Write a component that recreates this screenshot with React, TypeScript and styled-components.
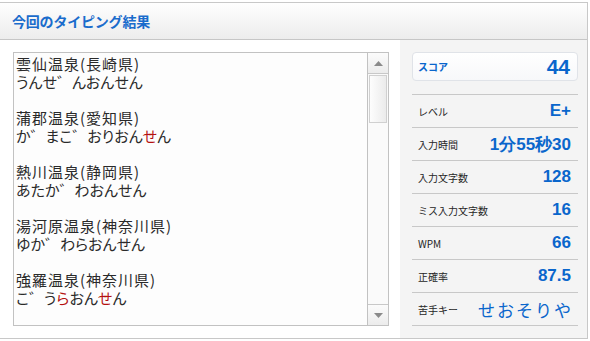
import React from 'react'
import styled, { createGlobalStyle } from 'styled-components'

const GlobalStyle = createGlobalStyle`
  body {
    margin: 0;
    background: #ffffff;
    font-family: "Noto Sans CJK JP", "Noto Sans", sans-serif;
  }
`

const blue = '#0a66cc'

interface Entry {
  name: string
  reading: { text: string; miss?: boolean }[]
}

const entries: Entry[] = [
  { name: '雲仙温泉(長崎県)', reading: [{ text: 'うんせ゛んおんせん' }] },
  {
    name: '蒲郡温泉(愛知県)',
    reading: [{ text: 'か゛まこ゛おりおん' }, { text: 'せ', miss: true }, { text: 'ん' }]
  },
  { name: '熱川温泉(静岡県)', reading: [{ text: 'あたか゛わおんせん' }] },
  { name: '湯河原温泉(神奈川県)', reading: [{ text: 'ゆか゛わらおんせん' }] },
  {
    name: '強羅温泉(神奈川県)',
    reading: [
      { text: 'こ゛う' },
      { text: 'ら', miss: true },
      { text: 'おん' },
      { text: 'せ', miss: true },
      { text: 'ん' }
    ]
  }
]

const stats = [
  { label: 'レベル', value: 'E+' },
  { label: '入力時間', value: '1分55秒30' },
  { label: '入力文字数', value: '128' },
  { label: 'ミス入力文字数', value: '16' },
  { label: 'WPM', value: '66' },
  { label: '正確率', value: '87.5' }
]

export default function App() {
  return (
    <>
      <GlobalStyle />
      <Panel>
        <Header>
          <Title>今回のタイピング結果</Title>
        </Header>
        <Body>
          <Left>
            <TextBox>
              <TextContent>
                {entries.map((e) => (
                  <Block key={e.name}>
                    <Line $spaced>{e.name}</Line>
                    <Line>
                      {e.reading.map((r, i) =>
                        r.miss ? <Miss key={i}>{r.text}</Miss> : <span key={i}>{r.text}</span>
                      )}
                    </Line>
                  </Block>
                ))}
              </TextContent>
              <ScrollBar>
                <ScrollButton>
                  <svg width="9" height="5" viewBox="0 0 9 5">
                    <path d="M4.5 0 L9 5 L0 5 Z" fill="#8a8a8a" />
                  </svg>
                </ScrollButton>
                <Track>
                  <Thumb />
                </Track>
                <ScrollButton>
                  <svg width="9" height="5" viewBox="0 0 9 5">
                    <path d="M0 0 L9 0 L4.5 5 Z" fill="#8a8a8a" />
                  </svg>
                </ScrollButton>
              </ScrollBar>
            </TextBox>
          </Left>
          <Side>
            <ScoreBox>
              <ScoreLabel>スコア</ScoreLabel>
              <ScoreValue>44</ScoreValue>
            </ScoreBox>
            <StatList>
              {stats.map((s) => (
                <StatRow key={s.label}>
                  <StatLabel>{s.label}</StatLabel>
                  <StatValue>{s.value}</StatValue>
                </StatRow>
              ))}
              <StatRow>
                <StatLabel>苦手キー</StatLabel>
                <WeakKeys>せおそりや</WeakKeys>
              </StatRow>
            </StatList>
          </Side>
        </Body>
      </Panel>
    </>
  )
}

const Panel = styled.div`
  margin-top: 2px;
  width: 587px;
  border-top: 1px solid #c8c8c8;
  border-right: 1px solid #c8c8c8;
  border-bottom: 1px solid #c8c8c8;
  background: #fff;
`

const Header = styled.div`
  height: 36px;
  display: flex;
  align-items: center;
  padding-left: 12px;
  background: linear-gradient(#fefefe, #ececec);
  border-bottom: 1px solid #c6c6c6;
`

const Title = styled.div`
  color: #1a6ccc;
  font-size: 14px;
  font-weight: bold;
  letter-spacing: -0.2px;
`

const Body = styled.div`
  display: flex;
  height: 298px;
`

const Left = styled.div`
  width: 400px;
  padding: 12px 0 0 13px;
  box-sizing: border-box;
`

const TextBox = styled.div`
  width: 376px;
  height: 274px;
  box-sizing: border-box;
  border: 1px solid #c2c2c2;
  background: #fdfdfd;
  display: flex;
`

const TextContent = styled.div`
  flex: 1;
  padding: 2px 0 0 2px;
  overflow: hidden;
  color: #2a2a2a;
  font-size: 15px;
  line-height: 18px;
  font-feature-settings: "palt";
`

const Block = styled.div`
  margin-bottom: 18px;
`

const Line = styled.div<{ $spaced?: boolean }>`
  white-space: nowrap;
  letter-spacing: ${(p) => (p.$spaced ? '1px' : '0')};
`

const Miss = styled.span`
  color: #b41010;
`

const ScrollBar = styled.div`
  width: 20px;
  border-left: 1px solid #c2c2c2;
  display: flex;
  flex-direction: column;
  background: #fafafa;
`

const ScrollButton = styled.div`
  height: 20px;
  display: flex;
  align-items: center;
  justify-content: center;
  background: linear-gradient(#fbfbfb, #ececec);
  &:first-child {
    border-bottom: 1px solid #c8c8c8;
  }
  &:last-child {
    border-top: 1px solid #c8c8c8;
  }
`

const Track = styled.div`
  flex: 1;
  padding: 1px 1px 0 1px;
`

const Thumb = styled.div`
  height: 48px;
  box-sizing: border-box;
  border: 1px solid #d0d0d0;
  background: linear-gradient(90deg, #fdfdfd, #ebebeb);
`

const Side = styled.div`
  flex: 1;
  background: #f4f4f4;
  padding: 12px 9px 0 12px;
`

const ScoreBox = styled.div`
  height: 29px;
  box-sizing: border-box;
  border: 1px solid #e0e3e8;
  border-radius: 4px;
  background: linear-gradient(#ffffff, #f7f8fa);
  display: flex;
  align-items: center;
  justify-content: space-between;
  padding: 0 7px 0 5px;
  margin-bottom: 13px;
`

const ScoreLabel = styled.div`
  color: ${blue};
  font-size: 10px;
  font-weight: bold;
`

const ScoreValue = styled.div`
  color: ${blue};
  font-family: "Liberation Sans", Arial, sans-serif;
  font-weight: bold;
  font-size: 21px;
`

const StatList = styled.div`
  border-top: 1px solid #c8c8c8;
`

const StatRow = styled.div`
  height: 32px;
  border-bottom: 1px solid #c8c8c8;
  display: flex;
  align-items: center;
  justify-content: space-between;
  padding: 0 7px 0 6px;
`

const StatLabel = styled.div`
  color: #262626;
  font-size: 10px;
`

const StatValue = styled.div`
  color: ${blue};
  font-family: "Liberation Sans", Arial, sans-serif;
  font-weight: bold;
  font-size: 17px;
`

const WeakKeys = styled.div`
  color: ${blue};
  font-size: 17px;
  letter-spacing: 2px;
  margin-right: -2px;
`
